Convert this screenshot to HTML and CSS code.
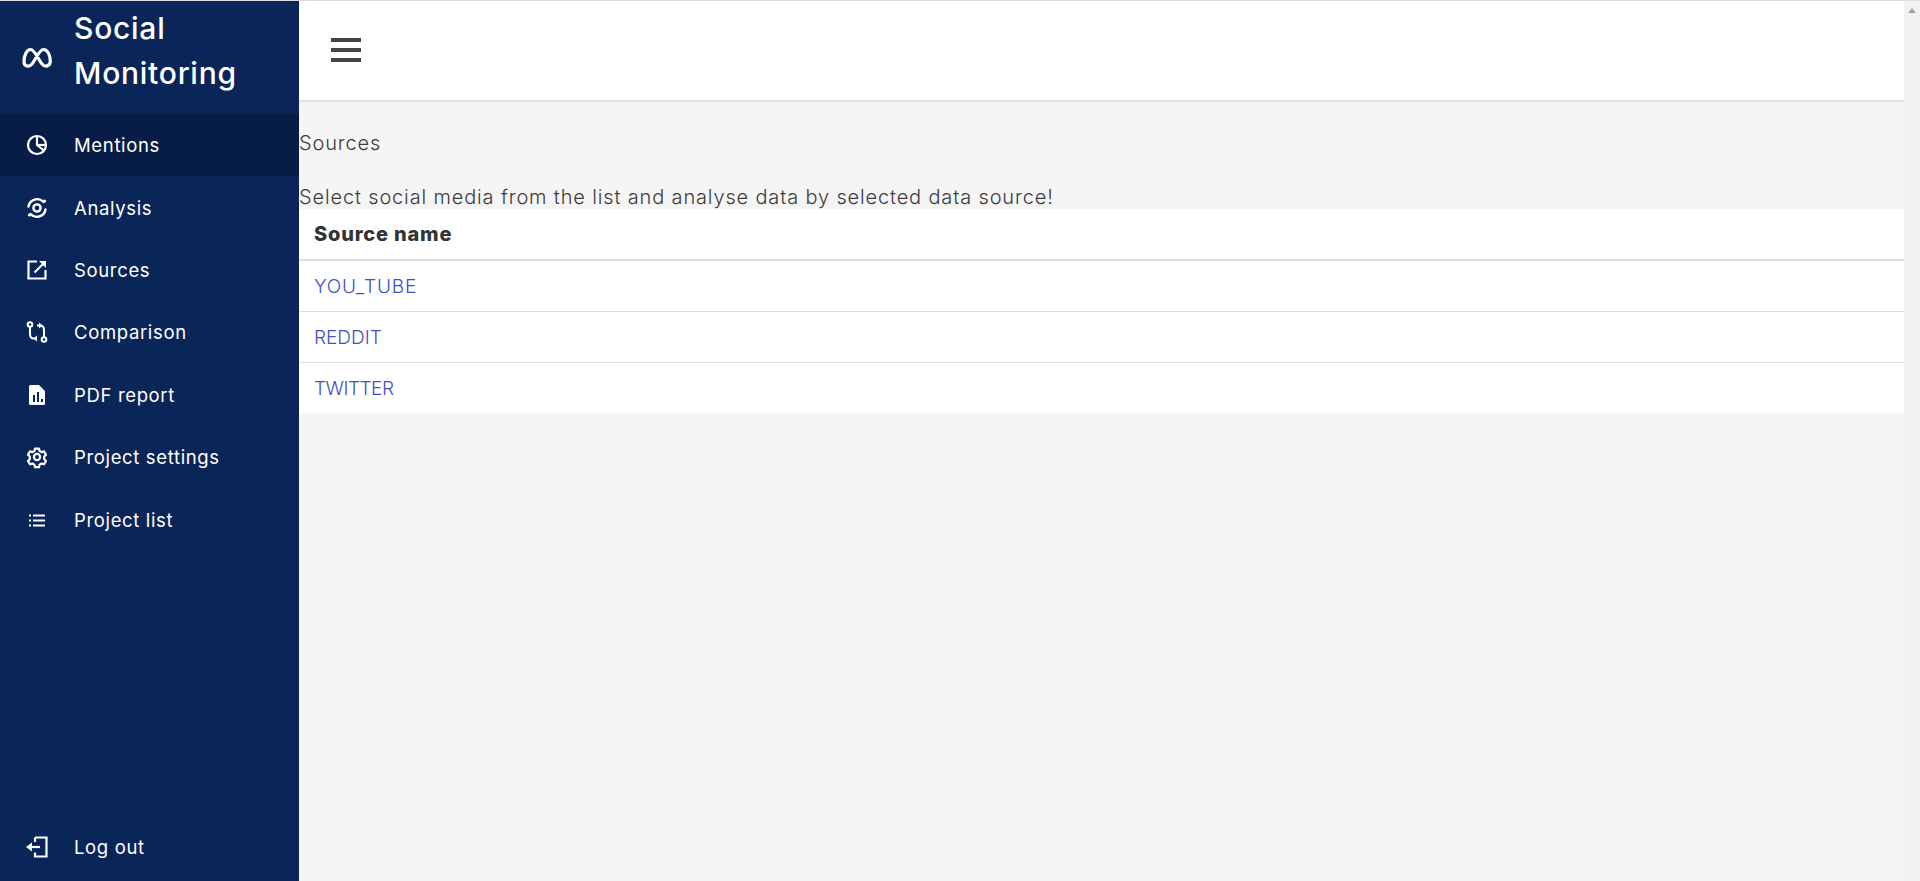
FILE: index.html
```html
<!DOCTYPE html>
<html lang="en">
<head>
<meta charset="utf-8">
<title>Social Monitoring</title>
<link rel="stylesheet" href="styles.css">
</head>
<body>
<div class="app">
  <aside class="sidebar">
    <div class="brand">
      <span class="brand-icon">
        <svg viewBox="0 0 30 22" width="30" height="22" fill="none" stroke="#fff" stroke-width="3.2" stroke-linecap="round"><path d="M2 14.500C2 8 5 2.500 8.500 2.500C13 2.500 16.500 13 20 17C23 20.500 28.300 19.500 28.300 14C28.300 8 25.500 2.500 21.500 2.500C17 2.500 13.500 13 10 17C7 20.500 2 19.500 2 14.500Z"/></svg>
      </span>
      <span class="brand-name">Social Monitoring</span>
    </div>
    <nav class="nav">
      <a class="nav-item active"><span class="nav-icon"><svg viewBox="0 0 24 24" width="24" height="24" fill="none" stroke="#fff" stroke-width="2.200"><circle cx="12" cy="12" r="9"/><path d="M12 3v9l7 5.500"/><path d="M12 12h9"/></svg></span><span>Mentions</span></a>
      <a class="nav-item"><span class="nav-icon"><svg viewBox="0 0 24 24" width="24" height="24" fill="none" stroke="#fff" stroke-width="2.400" stroke-linecap="round"><circle cx="12" cy="12" r="3.600"/><path d="M3.500 10.500A8.700 8.700 0 0 1 18.500 6"/><path d="M20.500 13.500A8.700 8.700 0 0 1 5.500 18"/><circle cx="19.500" cy="5" r="1.600" fill="#fff" stroke="none"/><circle cx="4.500" cy="19" r="1.600" fill="#fff" stroke="none"/></svg></span><span>Analysis</span></a>
      <a class="nav-item"><span class="nav-icon"><svg viewBox="0 0 24 24" width="24" height="24" fill="none" stroke="#fff" stroke-width="2.200"><path d="M12 3.500H3.500v17h17V12"/><path d="M9.500 14.500L20 4"/><path d="M14 3h7v7z" fill="#fff" stroke="none"/></svg></span><span>Sources</span></a>
      <a class="nav-item"><span class="nav-icon"><svg viewBox="0 0 24 24" width="24" height="24" fill="none" stroke="#fff" stroke-width="2"><circle cx="5" cy="4.500" r="2.300"/><circle cx="19" cy="19.500" r="2.300"/><path d="M5 7v7c0 3 1.500 4.500 4 4.500h3"/><path d="M19 17v-7c0-3-1.500-4.500-4-4.500h-3"/><path d="M11 15.500v6l-3.500-3zM13 8.500v-6l3.500 3z" fill="#fff" stroke="none" transform="translate(1 0)"/></svg></span><span>Comparison</span></a>
      <a class="nav-item"><span class="nav-icon"><svg viewBox="0 0 24 24" width="24" height="24"><path d="M6 2h8l6 6v12.500a1.500 1.500 0 0 1-1.500 1.500h-13A1.500 1.500 0 0 1 4 20.500v-17A1.500 1.500 0 0 1 5.500 2z" fill="#fff"/><path d="M8 12h2v7H8zM12 9h2v10h-2zM16 16h2v3h-2z" fill="#0a2558"/></svg></span><span>PDF report</span></a>
      <a class="nav-item"><span class="nav-icon"><svg viewBox="-1.500 -1.500 27 27" width="24" height="24" fill="none" stroke="#fff" stroke-width="2.500" stroke-linejoin="round"><circle cx="12" cy="12" r="3.500"/><path d="M9.800 2.500h4.400l.7 2.800 2.200 1.200 2.800-.8 2.200 3.800-2 2v2.900l2 2-2.200 3.800-2.800-.8-2.200 1.200-.7 2.900H9.800l-.7-2.900-2.200-1.200-2.800.8-2.200-3.800 2-2v-2.900l-2-2 2.200-3.800 2.800.8 2.200-1.200z"/></svg></span><span>Project settings</span></a>
      <a class="nav-item"><span class="nav-icon"><svg viewBox="0 0 24 24" width="24" height="24" fill="#fff"><path d="M8 6.500h12v2H8zM8 11.500h12v2H8zM8 16.500h12v2H8zM4 6.500h2v2H4zM4 11.500h2v2H4zM4 16.500h2v2H4z"/></svg></span><span>Project list</span></a>
    </nav>
    <a class="nav-item logout"><span class="nav-icon"><svg viewBox="0 0 24 24" width="24" height="24" fill="none" stroke="#fff" stroke-width="2.200"><path d="M10 2.500h11.500v19H10v-4"/><path d="M10 7V2.500"/><path d="M6 12h9"/><path d="M7 7.500v9L1 12z" fill="#fff" stroke="none"/></svg></span><span>Log out</span></a>
  </aside>
  <main class="main">
    <header class="topbar">
      <button class="menu-btn" aria-label="Menu"><span></span><span></span><span></span></button>
    </header>
    <section class="content">
      <p class="crumb">Sources</p>
      <p class="lead">Select social media from the list and analyse data by selected data source!</p>
      <table class="sources">
        <thead><tr><th>Source name</th></tr></thead>
        <tbody>
          <tr><td><a class="link-wide" href="#">YOU_TUBE</a></td></tr>
          <tr><td><a href="#">REDDIT</a></td></tr>
          <tr><td><a class="link-tight" href="#">TWITTER</a></td></tr>
        </tbody>
      </table>
    </section>
  </main>
  <div class="scrollbar"><span class="scroll-up"></span></div>
</div>
</body>
</html>
```
FILE: styles.css
```css
* { box-sizing: border-box; }
html, body { margin: 0; height: 100%; overflow: hidden; }
body {
  font-family: Inter, "Noto Sans", "Liberation Sans", sans-serif;
  color: #444;
  background: #f5f5f5;
}
.app {
  display: flex;
  height: 881px;
  border-top: 1px solid #ddd;
}
.sidebar {
  width: 299px;
  flex: none;
  background: #0a2558;
  color: #fff;
  display: flex;
  flex-direction: column;
  padding-bottom: 3px;
}
.brand {
  height: 113px;
  display: flex;
  align-items: center;
}
.brand-icon {
  width: 74px;
  flex: none;
  display: flex;
  justify-content: center;
  padding-right: 1px;
}
.brand-name {
  font-size: 30px;
  letter-spacing: 0.75px;
  line-height: 45px;
  font-weight: 500;
  margin-top: -13px;
}
.nav { display: flex; flex-direction: column; }
.nav-item {
  height: 62.4px;
  display: flex;
  align-items: center;
  font-size: 18.5px;
  letter-spacing: 0.65px;
  font-weight: 400;
  color: #fff;
}
.nav-item.active { background: #081d45; }
.nav-icon {
  width: 74px;
  flex: none;
  display: flex;
  justify-content: center;
  padding-right: 1px;
}
.logout { margin-top: auto; }
.main {
  flex: 1;
  min-width: 0;
  display: flex;
  flex-direction: column;
}
.topbar {
  height: 101px;
  background: #fff;
  border-bottom: 2px solid #e2e2e2;
  display: flex;
  align-items: center;
  padding-left: 32px;
  flex: none;
}
.menu-btn {
  width: 30px;
  height: 24px;
  padding: 0;
  border: 0;
  background: none;
  display: flex;
  flex-direction: column;
  justify-content: space-between;
  margin-top: -2px;
}
.menu-btn span {
  display: block;
  height: 4px;
  background: #444;
}
.content { padding-top: 27px; }
.crumb, .lead {
  margin: 0;
  font-size: 20px;
  letter-spacing: 0.85px;
  font-weight: 300;
  line-height: 29px;
  color: #3c3c3c;
}
.lead { margin-top: 27px; line-height: 24px; }
.sources {
  width: 100%;
  border-collapse: collapse;
  background: #fff;
}
.sources th {
  height: 51px;
  padding: 0 15px;
  text-align: left;
  font-size: 20px;
  letter-spacing: 0.8px;
  font-weight: 800;
  color: #333;
  border-bottom: 2px solid #ddd;
}
.sources td {
  height: 51px;
  padding: 1px 15px 0;
  font-size: 19px;
  font-weight: 300;
  border-bottom: 1px solid #ddd;
}
.sources tbody tr:last-child td { border-bottom: 0; height: 51px; }
.sources a { color: #3f51c5; text-decoration: none; }
.sources a.link-wide { letter-spacing: 0.8px; }
.sources a.link-tight { letter-spacing: -0.5px; }
.scrollbar {
  width: 16px;
  flex: none;
  background: #f1f1f1;
  display: flex;
  justify-content: center;
  padding-top: 7px;
}
.scroll-up {
  width: 0;
  height: 0;
  border-left: 4px solid transparent;
  border-right: 4px solid transparent;
  border-bottom: 5px solid #a3a3a3;
}
```
